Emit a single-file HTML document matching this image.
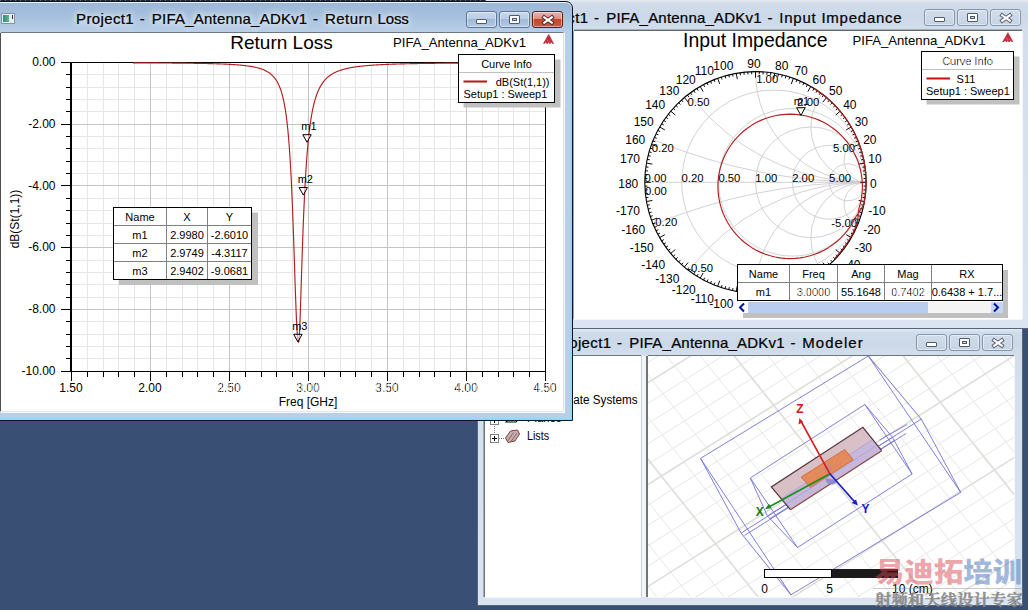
<!DOCTYPE html><html><head><meta charset="utf-8"><title>HFSS</title><style>
html,body{margin:0;padding:0}
body{width:1028px;height:610px;overflow:hidden;position:relative;background:#3a4f74;font-family:"Liberation Sans",sans-serif}
.abs{position:absolute}
svg{position:absolute;left:0;top:0;overflow:hidden}
svg text{font-family:"Liberation Sans",sans-serif}
.win{position:absolute;box-sizing:border-box}
.title{position:absolute;white-space:pre;color:#000;font-size:15px;line-height:20px;-webkit-text-stroke:0.22px #000}
.btn{position:absolute;box-sizing:border-box;border-radius:3px}
.client{position:absolute;background:#fff;overflow:hidden}
</style></head><body>
<svg width="1028" height="610" style="z-index:0"><defs><pattern id="dith" width="4" height="4" patternUnits="userSpaceOnUse"><rect width="4" height="4" fill="#3a4f74"/><rect x="0" y="0" width="1" height="1" fill="#34496d"/><rect x="2" y="2" width="1" height="1" fill="#34496d"/><rect x="2" y="0" width="1" height="1" fill="#3e5379"/><rect x="0" y="2" width="1" height="1" fill="#3e5379"/></pattern></defs><rect width="1028" height="610" fill="url(#dith)"/><rect width="1028" height="2" fill="#1e2839"/><path d="M0 0.5H1028" stroke="#5a6a86" stroke-width="1" stroke-dasharray="1 4"/></svg>
<div class="win" style="left:485px;top:-1px;width:555px;height:330px;background:linear-gradient(#e4ebf4 0px,#d2ddeb 3px,#cbd8e8 16px,#d3deec 30px,#dbe5f1 100%);border:1px solid #55657c;z-index:1">
</div>
<div class="title" id="t2" style="left:530.5px;top:7.5px;z-index:2;"><span style="letter-spacing:0.359px;white-space:pre">Project1</span><span style="letter-spacing:1.490px;white-space:pre"> - </span><span style="letter-spacing:0.213px;white-space:pre">PIFA_Antenna_ADKv1</span><span style="letter-spacing:1.390px;white-space:pre"> - </span><span style="letter-spacing:0.757px;white-space:pre">Input Impedance</span></div>
<div class="abs" style="z-index:2;left:0;top:0"><div class="btn" style="left:924.0px;top:9px;width:31px;height:17px;background:linear-gradient(#d2ddea,#c5d3e4);border:1px solid #8595ad;box-shadow:inset 0 0 0 1px rgba(255,255,255,.45)"></div><div class="abs" style="left:933.5px;top:17.0px;width:11px;height:4.5px;box-sizing:border-box;background:#fff;border:1px solid #505a6a;border-radius:1px"></div><div class="btn" style="left:957.1px;top:9px;width:31px;height:17px;background:linear-gradient(#d2ddea,#c5d3e4);border:1px solid #8595ad;box-shadow:inset 0 0 0 1px rgba(255,255,255,.45)"></div><div class="abs" style="left:966.6px;top:12.5px;width:11px;height:9px;box-sizing:border-box;background:#fff;border:1px solid #505a6a;border-radius:1px"></div><div class="abs" style="left:969.6px;top:15.5px;width:5px;height:3px;box-sizing:border-box;background:#c4d2e4;border:1px solid #505a6a"></div><div class="btn" style="left:990.2px;top:9px;width:31px;height:17px;background:linear-gradient(#d2ddea,#c5d3e4);border:1px solid #8595ad;box-shadow:inset 0 0 0 1px rgba(255,255,255,.45)"></div><svg style="left:998.7px;top:11.5px" width="14" height="12" viewBox="0 0 14 12"><path d="M3.2 3.3L10.8 8.7M10.8 3.3L3.2 8.7" stroke="#565f70" stroke-width="4" stroke-linecap="square" fill="none"/><path d="M3.2 3.3L10.8 8.7M10.8 3.3L3.2 8.7" stroke="#fff" stroke-width="2.1" stroke-linecap="square" fill="none"/></svg></div>
<div class="client" style="left:574px;top:31px;width:448px;height:288px;z-index:2;box-shadow:0 -1.4px 0 #62686f, -1px 0 0 #9aa7b8, 1px 0 0 #f4f8fc, 0 1px 0 #f4f8fc">
<svg width="448" height="288" viewBox="574 31 448 288">
<clipPath id="sc"><circle cx="755.5" cy="182.3" r="110.7"/></clipPath>
<g clip-path="url(#sc)" fill="none" stroke="#cdcdcd" stroke-width="0.9"><circle cx="773.95" cy="182.30" r="92.25"/><circle cx="792.40" cy="182.30" r="73.80"/><circle cx="810.85" cy="182.30" r="55.35"/><circle cx="829.30" cy="182.30" r="36.90"/><circle cx="847.75" cy="182.30" r="18.45"/><circle cx="866.20" cy="-371.20" r="553.50"/><circle cx="866.20" cy="735.80" r="553.50"/><circle cx="866.20" cy="-39.10" r="221.40"/><circle cx="866.20" cy="403.70" r="221.40"/><circle cx="866.20" cy="71.60" r="110.70"/><circle cx="866.20" cy="293.00" r="110.70"/><circle cx="866.20" cy="126.95" r="55.35"/><circle cx="866.20" cy="237.65" r="55.35"/><circle cx="866.20" cy="160.16" r="22.14"/><circle cx="866.20" cy="204.44" r="22.14"/><path d="M644.8 182.3H866.2"/></g>
<circle cx="755.5" cy="182.3" r="110.7" fill="none" stroke="#000" stroke-width="1.1"/>
<path d="M866.20 182.30L860.20 182.30M866.13 178.44L863.53 178.53M865.93 174.58L863.34 174.76M865.59 170.73L863.01 171.00M865.12 166.89L862.55 167.26M864.52 163.08L858.61 164.12M863.78 159.28L861.24 159.82M862.91 155.52L860.39 156.15M861.91 151.79L859.41 152.50M860.78 148.09L858.31 148.90M859.52 144.44L853.89 146.49M858.14 140.83L855.73 141.81M856.63 137.27L854.25 138.33M855.00 133.77L852.66 134.91M853.24 130.33L850.95 131.55M851.37 126.95L846.17 129.95M849.38 123.64L847.17 125.02M847.27 120.40L845.12 121.85M845.06 117.23L842.95 118.76M842.73 114.15L840.68 115.75M840.30 111.14L835.70 115.00M837.77 108.23L835.83 109.97M835.13 105.40L833.26 107.21M832.40 102.67L830.59 104.54M829.57 100.03L827.83 101.97M826.66 97.50L822.80 102.10M823.65 95.07L822.05 97.12M820.57 92.74L819.04 94.85M817.40 90.53L815.95 92.68M814.16 88.42L812.78 90.63M810.85 86.43L807.85 91.63M807.47 84.56L806.25 86.85M804.03 82.80L802.89 85.14M800.53 81.17L799.47 83.55M796.97 79.66L795.99 82.07M793.36 78.28L791.31 83.91M789.71 77.02L788.90 79.49M786.01 75.89L785.30 78.39M782.28 74.89L781.65 77.41M778.52 74.02L777.98 76.56M774.72 73.28L773.68 79.19M770.91 72.68L770.54 75.25M767.07 72.21L766.80 74.79M763.22 71.87L763.04 74.46M759.36 71.67L759.27 74.27M755.50 71.60L755.50 77.60M751.64 71.67L751.73 74.27M747.78 71.87L747.96 74.46M743.93 72.21L744.20 74.79M740.09 72.68L740.46 75.25M736.28 73.28L737.32 79.19M732.48 74.02L733.02 76.56M728.72 74.89L729.35 77.41M724.99 75.89L725.70 78.39M721.29 77.02L722.10 79.49M717.64 78.28L719.69 83.91M714.03 79.66L715.01 82.07M710.47 81.17L711.53 83.55M706.97 82.80L708.11 85.14M703.53 84.56L704.75 86.85M700.15 86.43L703.15 91.63M696.84 88.42L698.22 90.63M693.60 90.53L695.05 92.68M690.43 92.74L691.96 94.85M687.35 95.07L688.95 97.12M684.34 97.50L688.20 102.10M681.43 100.03L683.17 101.97M678.60 102.67L680.41 104.54M675.87 105.40L677.74 107.21M673.23 108.23L675.17 109.97M670.70 111.14L675.30 115.00M668.27 114.15L670.32 115.75M665.94 117.23L668.05 118.76M663.73 120.40L665.88 121.85M661.62 123.64L663.83 125.02M659.63 126.95L664.83 129.95M657.76 130.33L660.05 131.55M656.00 133.77L658.34 134.91M654.37 137.27L656.75 138.33M652.86 140.83L655.27 141.81M651.48 144.44L657.11 146.49M650.22 148.09L652.69 148.90M649.09 151.79L651.59 152.50M648.09 155.52L650.61 156.15M647.22 159.28L649.76 159.82M646.48 163.08L652.39 164.12M645.88 166.89L648.45 167.26M645.41 170.73L647.99 171.00M645.07 174.58L647.66 174.76M644.87 178.44L647.47 178.53M644.80 182.30L650.80 182.30M644.87 186.16L647.47 186.07M645.07 190.02L647.66 189.84M645.41 193.87L647.99 193.60M645.88 197.71L648.45 197.34M646.48 201.52L652.39 200.48M647.22 205.32L649.76 204.78M648.09 209.08L650.61 208.45M649.09 212.81L651.59 212.10M650.22 216.51L652.69 215.70M651.48 220.16L657.11 218.11M652.86 223.77L655.27 222.79M654.37 227.33L656.75 226.27M656.00 230.83L658.34 229.69M657.76 234.27L660.05 233.05M659.63 237.65L664.83 234.65M661.62 240.96L663.83 239.58M663.73 244.20L665.88 242.75M665.94 247.37L668.05 245.84M668.27 250.45L670.32 248.85M670.70 253.46L675.30 249.60M673.23 256.37L675.17 254.63M675.87 259.20L677.74 257.39M678.60 261.93L680.41 260.06M681.43 264.57L683.17 262.63M684.34 267.10L688.20 262.50M687.35 269.53L688.95 267.48M690.43 271.86L691.96 269.75M693.60 274.07L695.05 271.92M696.84 276.18L698.22 273.97M700.15 278.17L703.15 272.97M703.53 280.04L704.75 277.75M706.97 281.80L708.11 279.46M710.47 283.43L711.53 281.05M714.03 284.94L715.01 282.53M717.64 286.32L719.69 280.69M721.29 287.58L722.10 285.11M724.99 288.71L725.70 286.21M728.72 289.71L729.35 287.19M732.48 290.58L733.02 288.04M736.28 291.32L737.32 285.41M740.09 291.92L740.46 289.35M743.93 292.39L744.20 289.81M747.78 292.73L747.96 290.14M751.64 292.93L751.73 290.33M755.50 293.00L755.50 287.00M759.36 292.93L759.27 290.33M763.22 292.73L763.04 290.14M767.07 292.39L766.80 289.81M770.91 291.92L770.54 289.35M774.72 291.32L773.68 285.41M778.52 290.58L777.98 288.04M782.28 289.71L781.65 287.19M786.01 288.71L785.30 286.21M789.71 287.58L788.90 285.11M793.36 286.32L791.31 280.69M796.97 284.94L795.99 282.53M800.53 283.43L799.47 281.05M804.03 281.80L802.89 279.46M807.47 280.04L806.25 277.75M810.85 278.17L807.85 272.97M814.16 276.18L812.78 273.97M817.40 274.07L815.95 271.92M820.57 271.86L819.04 269.75M823.65 269.53L822.05 267.48M826.66 267.10L822.80 262.50M829.57 264.57L827.83 262.63M832.40 261.93L830.59 260.06M835.13 259.20L833.26 257.39M837.77 256.37L835.83 254.63M840.30 253.46L835.70 249.60M842.73 250.45L840.68 248.85M845.06 247.37L842.95 245.84M847.27 244.20L845.12 242.75M849.38 240.96L847.17 239.58M851.37 237.65L846.17 234.65M853.24 234.27L850.95 233.05M855.00 230.83L852.66 229.69M856.63 227.33L854.25 226.27M858.14 223.77L855.73 222.79M859.52 220.16L853.89 218.11M860.78 216.51L858.31 215.70M861.91 212.81L859.41 212.10M862.91 209.08L860.39 208.45M863.78 205.32L861.24 204.78M864.52 201.52L858.61 200.48M865.12 197.71L862.55 197.34M865.59 193.87L863.01 193.60M865.93 190.02L863.34 189.84M866.13 186.16L863.53 186.07" stroke="#000" stroke-width="0.95" fill="none"/>
<text x="640.05" y="214.57" font-size="12" text-anchor="end" fill="#000" >-170</text>
<text x="645.24" y="233.93" font-size="12" text-anchor="end" fill="#000" >-160</text>
<text x="653.71" y="252.10" font-size="12" text-anchor="end" fill="#000" >-150</text>
<text x="665.20" y="268.52" font-size="12" text-anchor="end" fill="#000" >-140</text>
<text x="679.38" y="282.70" font-size="12" text-anchor="end" fill="#000" >-130</text>
<text x="695.80" y="294.19" font-size="12" text-anchor="end" fill="#000" >-120</text>
<text x="713.97" y="302.66" font-size="12" text-anchor="end" fill="#000" >-110</text>
<text x="733.33" y="307.85" font-size="12" text-anchor="end" fill="#000" >-100</text>
<text x="754.00" y="309.60" font-size="12" text-anchor="middle" fill="#000" >-90</text>
<text x="775.07" y="307.85" font-size="12" text-anchor="start" fill="#000" >-80</text>
<text x="794.43" y="302.66" font-size="12" text-anchor="start" fill="#000" >-70</text>
<text x="812.60" y="294.19" font-size="12" text-anchor="start" fill="#000" >-60</text>
<text x="829.02" y="282.70" font-size="12" text-anchor="start" fill="#000" >-50</text>
<text x="843.20" y="268.52" font-size="12" text-anchor="start" fill="#000" >-40</text>
<text x="854.69" y="252.10" font-size="12" text-anchor="start" fill="#000" >-30</text>
<text x="863.16" y="233.93" font-size="12" text-anchor="start" fill="#000" >-20</text>
<text x="868.35" y="214.57" font-size="12" text-anchor="start" fill="#000" >-10</text>
<text x="870.10" y="188.10" font-size="12" text-anchor="start" fill="#000" >0</text>
<text x="868.35" y="163.23" font-size="12" text-anchor="start" fill="#000" >10</text>
<text x="863.16" y="143.87" font-size="12" text-anchor="start" fill="#000" >20</text>
<text x="854.69" y="125.70" font-size="12" text-anchor="start" fill="#000" >30</text>
<text x="843.20" y="109.28" font-size="12" text-anchor="start" fill="#000" >40</text>
<text x="829.02" y="95.10" font-size="12" text-anchor="start" fill="#000" >50</text>
<text x="812.60" y="83.61" font-size="12" text-anchor="start" fill="#000" >60</text>
<text x="794.43" y="75.14" font-size="12" text-anchor="start" fill="#000" >70</text>
<text x="775.07" y="69.95" font-size="12" text-anchor="start" fill="#000" >80</text>
<text x="754.00" y="68.20" font-size="12" text-anchor="middle" fill="#000" >90</text>
<text x="733.33" y="69.95" font-size="12" text-anchor="end" fill="#000" >100</text>
<text x="713.97" y="75.14" font-size="12" text-anchor="end" fill="#000" >110</text>
<text x="695.80" y="83.61" font-size="12" text-anchor="end" fill="#000" >120</text>
<text x="679.38" y="95.10" font-size="12" text-anchor="end" fill="#000" >130</text>
<text x="665.20" y="109.28" font-size="12" text-anchor="end" fill="#000" >140</text>
<text x="653.71" y="125.70" font-size="12" text-anchor="end" fill="#000" >150</text>
<text x="645.24" y="143.87" font-size="12" text-anchor="end" fill="#000" >160</text>
<text x="640.05" y="163.23" font-size="12" text-anchor="end" fill="#000" >170</text>
<text x="638.30" y="188.10" font-size="12" text-anchor="end" fill="#000" >180</text>
<text x="644.60" y="182.20" font-size="11.3" text-anchor="start" fill="#000" >0.00</text>
<text x="681.50" y="182.20" font-size="11.3" text-anchor="start" fill="#000" >0.20</text>
<text x="718.40" y="182.20" font-size="11.3" text-anchor="start" fill="#000" >0.50</text>
<text x="755.30" y="182.20" font-size="11.3" text-anchor="start" fill="#000" >1.00</text>
<text x="792.20" y="182.20" font-size="11.3" text-anchor="start" fill="#000" >2.00</text>
<text x="829.10" y="182.20" font-size="11.3" text-anchor="start" fill="#000" >5.00</text>
<text x="651.72" y="151.52" font-size="11.3" text-anchor="start" fill="#000" >0.20</text>
<text x="651.52" y="226.38" font-size="11.3" text-anchor="start" fill="#000" >-0.20</text>
<text x="687.48" y="105.54" font-size="11.3" text-anchor="start" fill="#000" >0.50</text>
<text x="687.28" y="272.36" font-size="11.3" text-anchor="start" fill="#000" >-0.50</text>
<text x="756.20" y="83.40" font-size="11.3" text-anchor="start" fill="#000" >1.00</text>
<text x="753.70" y="294.50" font-size="11.3" text-anchor="start" fill="#000" >-1.00</text>
<text x="819.32" y="105.64" font-size="11.3" text-anchor="end" fill="#000" >2.00</text>
<text x="821.32" y="272.66" font-size="11.3" text-anchor="end" fill="#000" >-2.00</text>
<text x="855.08" y="151.62" font-size="11.3" text-anchor="end" fill="#000" >5.00</text>
<text x="857.08" y="226.68" font-size="11.3" text-anchor="end" fill="#000" >-5.00</text>
<text x="644.90" y="195.20" font-size="11.3" text-anchor="start" fill="#000" >0.00</text>
<path d="M814.04 88.61 L817.28 90.71 L820.44 92.92 L823.52 95.24 L826.51 97.67 L829.42 100.20 L832.24 102.83 L834.97 105.56 L837.60 108.38 L840.13 111.29 L842.56 114.28 L844.88 117.36 L847.09 120.52 L849.19 123.76 L851.18 127.06 L853.05 130.43 L854.80 133.87 L856.43 137.36 L857.93 140.91 L859.32 144.51 L860.57 148.16 L861.70 151.85 L862.70 155.57 L863.56 159.33 L864.30 163.12 L864.90 166.92 L865.37 170.75 L865.71 174.59 L865.91 178.44 L865.98 182.30 L865.91 186.16 L865.71 190.01 L865.37 193.85 L864.90 197.68 L864.30 201.48 L863.56 205.27 L855.07 218.04 L852.70 222.49 L850.03 226.77 L847.07 230.84 L843.83 234.71 L840.33 238.33 L836.58 241.71 L832.61 244.81 L828.43 247.63 L824.06 250.15 L819.53 252.36 L814.85 254.25 L810.06 255.81 L805.17 257.03 L800.20 257.90 L795.19 258.43 L790.15 258.61 L785.11 258.43 L780.10 257.90 L775.13 257.03 L770.24 255.81 L765.44 254.25 L760.77 252.36 L756.24 250.15 L751.87 247.63 L747.69 244.81 L743.72 241.71 L739.97 238.33 L736.47 234.71 L733.23 230.84 L730.27 226.77 L727.59 222.49 L725.23 218.04 L723.18 213.43 L721.45 208.69 L720.06 203.85 L719.01 198.92 L718.31 193.92 L717.96 188.89 L717.96 183.85 L718.31 178.82 L719.01 173.83 L720.06 168.90 L721.45 164.05 L723.18 159.32 L725.23 154.71 L727.59 150.26 L730.27 145.98 L733.23 141.90 L736.47 138.04 L739.97 134.41 L743.72 131.04 L747.69 127.94 L751.87 125.12 L756.24 122.60 L760.77 120.39 L765.44 118.50 L770.24 116.94 L775.13 115.72 L780.10 114.84 L785.11 114.32 L790.15 114.14 L795.19 114.32 L800.20 114.84 L805.17 115.72 L810.06 116.94 L814.85 118.50 L819.53 120.39 L824.06 122.60 L828.43 125.12 L832.61 127.94 L836.58 131.04 L840.33 134.41 L843.83 138.04 L847.07 141.90 L850.03 145.98 L852.70 150.26 L855.07 154.71 L857.12 159.32 L858.85 164.05 L860.24 168.90 L861.28 173.83 L861.99 178.82 L862.34 183.85 L862.34 188.89 L861.99 193.92 L861.28 198.92 L860.24 203.85 L858.85 208.69 L857.32 223.44 L855.82 226.97 L854.20 230.44 L852.46 233.85 L850.60 237.21 L848.63 240.49 L846.54 243.71 L844.34 246.85 L842.03 249.91 L839.62 252.89 L837.11 255.78 L834.49 258.58" stroke="#b41e1e" stroke-width="1.15" fill="none" stroke-linejoin="round"/>
<path d="M800.9 115.3 l-4.3 -7.6 h8.6 Z" fill="#fff" fill-opacity="0.5" stroke="#000" stroke-width="1"/>
<text x="801.45" y="105.40" font-size="11" text-anchor="middle" fill="#000" >m1</text>
<text x="755.30" y="47.00" font-size="19.4" text-anchor="middle" fill="#000" >Input Impedance</text>
<text x="852.50" y="45.00" font-size="13.15" text-anchor="start" fill="#000" >PIFA_Antenna_ADKv1</text>
<g transform="translate(1002.3,32.4)"><path d="M5.4 0 L6 0 L11 9.6 L9.3 9.6 L8.3 8 L7.4 9.6 L6.2 9.6 L5.5 8 L4.8 9.6 L3.6 9.6 L2.8 8 L1.8 9.6 L0 9.6 Z" fill="#c4283c"/><path d="M5.6 0.5 L6.6 3 L5.8 2.6Z M7.4 4.4 L8.2 6 L7.2 5.4Z M3.2 5 L4 4.2 L3.8 5.6Z M9.6 8 L10.6 9.4 L9.6 9.2Z" fill="#9a8a88"/><path d="M4.4 5.2 L5.6 6.8 L4.2 7.4Z M6.6 6.2 L7.6 7.6 L6.4 7.6Z" fill="#e87a8a"/></g>
<rect x="926.5" y="56.5" width="93" height="48" fill="#c0c0c0"/>
<rect x="921.5" y="51.5" width="92" height="48" fill="#fff" stroke="#000" stroke-width="1" shape-rendering="crispEdges"/>
<path d="M922 69.5H1013" stroke="#c0c0c0" stroke-width="1" shape-rendering="crispEdges"/>
<text x="967.50" y="65.00" font-size="11" text-anchor="middle" fill="#000" >Curve Info</text>
<rect x="940" y="56" width="56" height="11" fill="url(#garb)" opacity="0.7"/>
<path d="M926.5 78.5H950" stroke="#c01010" stroke-width="2"/>
<text x="966.00" y="83.00" font-size="11" text-anchor="middle" fill="#000" >S11</text>
<text x="926.00" y="95.00" font-size="11" text-anchor="start" fill="#000" >Setup1 : Sweep1</text>
<rect x="743" y="270" width="265" height="48" fill="#c0c0c0"/>
<rect x="737.5" y="264.5" width="265" height="36" fill="#fff" stroke="#000" stroke-width="1" shape-rendering="crispEdges"/>
<path d="M789.5 265V300M837.5 265V300M884.5 265V300M931.5 265V300M738 282.5H1002" stroke="#808080" stroke-width="1" shape-rendering="crispEdges"/>
<text x="763.50" y="278.00" font-size="11" text-anchor="middle" fill="#000" >Name</text>
<text x="813.50" y="278.00" font-size="11" text-anchor="middle" fill="#000" >Freq</text>
<text x="861.00" y="278.00" font-size="11" text-anchor="middle" fill="#000" >Ang</text>
<text x="908.00" y="278.00" font-size="11" text-anchor="middle" fill="#000" >Mag</text>
<text x="967.00" y="278.00" font-size="11" text-anchor="middle" fill="#000" >RX</text>
<text x="763.50" y="296.00" font-size="11" text-anchor="middle" fill="#000" >m1</text>
<text x="813.50" y="296.00" font-size="11" text-anchor="middle" fill="#000" >3.0000</text>
<text x="861.00" y="296.00" font-size="11" text-anchor="middle" fill="#000" >55.1648</text>
<text x="908.00" y="296.00" font-size="11" text-anchor="middle" fill="#000" >0.7402</text>
<text x="967.00" y="296.00" font-size="11" text-anchor="middle" fill="#000" >0.6438 + 1.7...</text>
<rect x="796" y="286" width="36" height="11" fill="url(#garb)" opacity="0.8"/>
<rect x="890" y="286" width="36" height="11" fill="url(#garb)" opacity="0.8"/>
<rect x="738" y="301" width="265" height="12" fill="#fff"/>
<rect x="748" y="302" width="180" height="11" fill="#b8cdf0"/>
<rect x="928" y="302" width="63" height="11" fill="#f4f4f4"/>
<rect x="991" y="302" width="12" height="11" fill="#c4d6f2"/>
<path d="M744 303.5 l-4 4 l4 4" stroke="#00109a" stroke-width="2" fill="none"/>
<path d="M994 303.5 l4 4 l-4 4" stroke="#00109a" stroke-width="2" fill="none"/>
</svg></div>
<div class="win" style="left:477px;top:328px;width:546px;height:278px;background:linear-gradient(#e4ebf4 0px,#d2ddeb 3px,#cbd8e8 14px,#d3deec 27px,#dbe5f1 100%);border:1px solid #55657c;z-index:3"></div>
<div class="title" id="t3" style="left:553.5px;top:332.5px;z-index:4;"><span style="letter-spacing:0.359px;white-space:pre">Project1</span><span style="letter-spacing:1.490px;white-space:pre"> - </span><span style="letter-spacing:0.213px;white-space:pre">PIFA_Antenna_ADKv1</span><span style="letter-spacing:1.390px;white-space:pre"> - </span><span style="letter-spacing:1.016px;white-space:pre">Modeler</span></div>
<div class="abs" style="z-index:4;left:0;top:0"><div class="btn" style="left:916.0px;top:334px;width:31px;height:17px;background:linear-gradient(#d2ddea,#c5d3e4);border:1px solid #8595ad;box-shadow:inset 0 0 0 1px rgba(255,255,255,.45)"></div><div class="abs" style="left:925.5px;top:342.0px;width:11px;height:4.5px;box-sizing:border-box;background:#fff;border:1px solid #505a6a;border-radius:1px"></div><div class="btn" style="left:949.1px;top:334px;width:31px;height:17px;background:linear-gradient(#d2ddea,#c5d3e4);border:1px solid #8595ad;box-shadow:inset 0 0 0 1px rgba(255,255,255,.45)"></div><div class="abs" style="left:958.6px;top:337.5px;width:11px;height:9px;box-sizing:border-box;background:#fff;border:1px solid #505a6a;border-radius:1px"></div><div class="abs" style="left:961.6px;top:340.5px;width:5px;height:3px;box-sizing:border-box;background:#c4d2e4;border:1px solid #505a6a"></div><div class="btn" style="left:982.2px;top:334px;width:31px;height:17px;background:linear-gradient(#d2ddea,#c5d3e4);border:1px solid #8595ad;box-shadow:inset 0 0 0 1px rgba(255,255,255,.45)"></div><svg style="left:990.7px;top:336.5px" width="14" height="12" viewBox="0 0 14 12"><path d="M3.2 3.3L10.8 8.7M10.8 3.3L3.2 8.7" stroke="#565f70" stroke-width="4" stroke-linecap="square" fill="none"/><path d="M3.2 3.3L10.8 8.7M10.8 3.3L3.2 8.7" stroke="#fff" stroke-width="2.1" stroke-linecap="square" fill="none"/></svg></div>
<div class="client" style="left:485px;top:356px;width:156px;height:241px;z-index:4;box-shadow:0 -1px 0 #6e7683,-1.5px 0 0 #6f747b, 1px 0 0 #c9ced6, 0 1px 0 #f4f8fc">
<div class="abs" style="right:3.9px;top:36.2px;font-size:12.5px;line-height:16px;white-space:nowrap;transform:scaleX(0.935);transform-origin:100% 50%" id="tcs">Coordinate Systems</div>
<div class="abs" style="left:41.6px;top:53.8px;font-size:12.5px;line-height:16px;white-space:nowrap;transform:scaleX(0.9);transform-origin:0 50%">Planes</div>
<div class="abs" style="left:41.6px;top:72.3px;font-size:12.5px;line-height:16px;white-space:nowrap;transform:scaleX(0.86);transform-origin:0 50%" id="tls">Lists</div>
<svg width="156" height="241" viewBox="485 356 156 241">
<path d="M494.5 400V434M499 438.5H505M499 420.5H505" stroke="#808080" stroke-width="1" stroke-dasharray="1 1" shape-rendering="crispEdges"/>
<rect x="490.5" y="416.5" width="8" height="8" fill="#fff" stroke="#808080" stroke-width="1" shape-rendering="crispEdges"/>
<path d="M492 420.5H497M494.5 418.0V423.0" stroke="#000" stroke-width="1" shape-rendering="crispEdges"/>
<rect x="490.5" y="434.5" width="8" height="8" fill="#fff" stroke="#808080" stroke-width="1" shape-rendering="crispEdges"/>
<path d="M492 438.5H497M494.5 436.0V441.0" stroke="#000" stroke-width="1" shape-rendering="crispEdges"/>
<path d="M505.5 438L510.5 431L517.5 430L519.5 434L515 441L508 442.5Z" fill="#c0b0b0" stroke="#8a3a3a" stroke-width="1"/>
<path d="M508 440.5L513.5 432.5M511 441.5L517 433" stroke="#7a5050" stroke-width="0.8"/>
<path d="M506 422L510 417H520L516 422Z" fill="#fff" stroke="#000" stroke-width="1.2"/>
</svg>
</div>
<div class="abs" style="left:642px;top:356px;width:5px;height:241px;background:#f2f4f7;z-index:4"></div>
<div class="client" style="left:648px;top:356px;width:366px;height:241px;z-index:4;box-shadow:0 -1px 0 #6e7683,-2px 0 0 #70757c, 1px 0 0 #f4f8fc, 0 1px 0 #f4f8fc">
<svg width="366" height="241" viewBox="648 356 366 241">
<path d="M640 102.8L1020 -136.6M640 123.1L1020 -116.3M640 143.5L1020 -95.9M640 163.8L1020 -75.6M640 204.6L1020 -34.8M640 224.9L1020 -14.5M640 245.3L1020 5.9M640 265.6L1020 26.2M640 306.4L1020 67.0M640 326.7L1020 87.3M640 347.1L1020 107.7M640 367.4L1020 128.0M640 408.2L1020 168.8M640 428.5L1020 189.1M640 448.9L1020 209.5M640 469.2L1020 229.8M640 510.0L1020 270.6M640 530.3L1020 290.9M640 550.7L1020 311.3M640 571.0L1020 331.6M640 611.8L1020 372.4M640 632.1L1020 392.7M640 652.5L1020 413.1M640 672.8L1020 433.4M640 713.6L1020 474.2M640 733.9L1020 494.5M640 754.3L1020 514.9M640 774.6L1020 535.2M640 815.4L1020 576.0M640 835.7L1020 596.3M640 856.1L1020 616.7M640 876.4L1020 637.0M640 917.2L1020 677.8M640 937.5L1020 698.1M640 957.9L1020 718.5M640 978.2L1020 738.8M640 1019.0L1020 779.6M640 1039.3L1020 799.9M640 1059.7L1020 820.3M640 1080.0L1020 840.6M640 1120.8L1020 881.4M640 1141.1L1020 901.7M640 1161.5L1020 922.1M640 1181.8L1020 942.4M87.3 350L287.3 600M121.1 350L321.1 600M154.9 350L354.9 600M188.7 350L388.7 600M256.3 350L456.3 600M290.1 350L490.1 600M323.9 350L523.9 600M357.7 350L557.7 600M425.3 350L625.3 600M459.1 350L659.1 600M492.9 350L692.9 600M526.7 350L726.7 600M594.3 350L794.3 600M628.1 350L828.1 600M661.9 350L861.9 600M695.7 350L895.7 600M763.3 350L963.3 600M797.1 350L997.1 600M830.9 350L1030.9 600M864.7 350L1064.7 600M932.3 350L1132.3 600M966.1 350L1166.1 600M999.9 350L1199.9 600M1033.7 350L1233.7 600M1101.3 350L1301.3 600" stroke="#e7e7e3" stroke-width="1" fill="none"/>
<path d="M640 82.4L1020 -157.0M640 184.2L1020 -55.2M640 286.0L1020 46.6M640 387.8L1020 148.4M640 489.6L1020 250.2M640 591.4L1020 352.0M640 693.2L1020 453.8M640 795.0L1020 555.6M640 896.8L1020 657.4M640 998.6L1020 759.2M640 1100.4L1020 861.0M53.5 350L253.5 600M222.5 350L422.5 600M391.5 350L591.5 600M560.5 350L760.5 600M729.5 350L929.5 600M898.5 350L1098.5 600M1067.5 350L1267.5 600" stroke="#dededa" stroke-width="1.6" fill="none"/>
<path d="M868.3 356.0L960.7 492.4L791.0 594.8L700.5 458.4ZM868.3 356.0L921.3 419.0M921.3 419.0L960.7 492.4M700.5 458.4L741.1 533.1M741.1 533.1L791.0 594.8M741.1 533.1L921.3 419.0M864.9 404.5L912.1 474.0L797.5 547.5L750.3 478.0ZM864.9 404.5L892.5 437.3M892.5 437.3L912.1 474.0M750.3 478.0L767.4 516.0M767.4 516.0L797.5 547.5M767.4 516.0L892.5 437.3M744.5 535.5L906.0 433.5M770.0 518.5L895.0 440.0M879.5 440.0L907.0 424.5" stroke="#7272d6" stroke-width="0.9" fill="none"/>
<path d="M771.3 486.9L862.9 427.3L881.7 450.7L790.5 509.7Z" fill="#d6bac2" fill-opacity="0.93"/>
<path d="M781.3 498.8L872.7 439.5L881.7 450.7L790.5 509.7Z" fill="#c6b6dc" fill-opacity="0.95"/>
<path d="M785.9 504.2L877.2 445.1M781.3 498.8L872.7 439.5" stroke="#a9a0d8" stroke-width="0.8" fill="none"/>
<path d="M790.5 509.7L771.3 486.9L862.9 427.3L881.7 450.7" fill="none" stroke="#553640" stroke-width="1.2"/>
<path d="M790.5 509.7L881.7 450.7" stroke="#8a4a40" stroke-width="1.3"/>
<path d="M801.1 477.1L844.8 449.4L853.3 459.7L810.3 487.4Z" fill="#e48a5a" stroke="#c46a3c" stroke-width="0.8"/>
<ellipse cx="828" cy="468.8" rx="3.6" ry="4.6" fill="#c08888" fill-opacity="0.8"/>
<path d="M825.6 478.3 A6.2 6.2 0 0 0 837.6 480.6 Z" fill="#8c86d0" fill-opacity="0.9"/>
<path d="M829.9 473.8L767.5 507.8" stroke="#1c8c1c" stroke-width="1.6"/>
<path d="M765 509.2l6.5 -1.2l-2.6 -4.2Z" fill="#1c8c1c"/>
<path d="M829.9 473.8L800.6 420.5" stroke="#d81c1c" stroke-width="1.6"/>
<path d="M799.4 418l-0.9 6.4l4.6 -2.4Z" fill="#d81c1c"/>
<path d="M829.9 473.8L856 503.4" stroke="#1c1cc8" stroke-width="1.6"/>
<path d="M858 505.6l-2 -6.2l-4.2 3.6Z" fill="#1c1cc8"/>
<text x="800.00" y="413.00" font-size="12" text-anchor="middle" fill="#c81818" font-weight="bold">Z</text>
<text x="865.50" y="512.50" font-size="12" text-anchor="middle" fill="#1818c0" font-weight="bold">Y</text>
<text x="759.70" y="516.00" font-size="12" text-anchor="middle" fill="#187818" font-weight="bold">X</text>
<rect x="764.5" y="569.5" width="67" height="8" fill="#fff" stroke="#000" stroke-width="1" shape-rendering="crispEdges"/>
<rect x="831.5" y="569" width="66.5" height="9" fill="#1a1a1a" shape-rendering="crispEdges"/>
<text x="764.60" y="593.00" font-size="12" text-anchor="middle" fill="#000" >0</text>
<text x="829.70" y="593.00" font-size="12" text-anchor="middle" fill="#000" >5</text>
<text x="892.00" y="593.00" font-size="12" text-anchor="start" fill="#000" >10 (cm)</text>
</svg></div>
<div class="win" style="left:-8px;top:1px;width:581px;height:420px;background:linear-gradient(#9cb8d7 0px,#a5c0dd 14px,#b9cfe8 30px,#b9cfe9 100%);border:1px solid #10161f;border-radius:7px 7px 0 0;box-shadow:inset 0 1px 0 0 rgba(255,255,255,.8);overflow:hidden;z-index:10"><div class="abs" style="right:0;top:26px;bottom:0;width:2px;background:linear-gradient(90deg,#9fd8f0,#7fdcf5)"></div><div class="abs" style="left:0;right:0;bottom:0;height:2px;background:linear-gradient(#93dcf3,#7fdcf5)"></div></div>
<div class="title" id="t1" style="left:76.1px;top:8.5px;z-index:11;text-shadow:0 0 6px #fff,0 0 8px #fff"><span style="letter-spacing:0.359px;white-space:pre">Project1</span><span style="letter-spacing:1.490px;white-space:pre"> - </span><span style="letter-spacing:0.213px;white-space:pre">PIFA_Antenna_ADKv1</span><span style="letter-spacing:1.390px;white-space:pre"> - </span><span style="letter-spacing:0.473px;white-space:pre">Return </span><span style="letter-spacing:-0.120px;white-space:pre">Loss</span></div>
<div class="abs" style="z-index:11;left:0;top:0"><div class="btn" style="left:466.0px;top:11px;width:31px;height:17px;background:linear-gradient(#c8d8eb 0%,#b9cde5 45%,#9fbad9 50%,#b3cae5 100%);border:1px solid #5e7794;box-shadow:inset 0 0 0 1px rgba(255,255,255,.45)"></div><div class="abs" style="left:475.5px;top:19.0px;width:11px;height:4.5px;box-sizing:border-box;background:#fff;border:1px solid #505a6a;border-radius:1px"></div><div class="btn" style="left:499.1px;top:11px;width:31px;height:17px;background:linear-gradient(#c8d8eb 0%,#b9cde5 45%,#9fbad9 50%,#b3cae5 100%);border:1px solid #5e7794;box-shadow:inset 0 0 0 1px rgba(255,255,255,.45)"></div><div class="abs" style="left:508.6px;top:14.5px;width:11px;height:9px;box-sizing:border-box;background:#fff;border:1px solid #505a6a;border-radius:1px"></div><div class="abs" style="left:511.6px;top:17.5px;width:5px;height:3px;box-sizing:border-box;background:#c4d2e4;border:1px solid #505a6a"></div><div class="btn" style="left:532.2px;top:11px;width:31px;height:17px;background:linear-gradient(#e8b5a8 0%,#dc9080 45%,#c4472f 50%,#cb5943 100%);border:1px solid #5a1f17;box-shadow:inset 0 0 0 1px rgba(255,255,255,.45)"></div><svg style="left:540.7px;top:13.5px" width="14" height="12" viewBox="0 0 14 12"><path d="M3.2 3.3L10.8 8.7M10.8 3.3L3.2 8.7" stroke="#4a2a2a" stroke-width="4" stroke-linecap="square" fill="none"/><path d="M3.2 3.3L10.8 8.7M10.8 3.3L3.2 8.7" stroke="#fff" stroke-width="2.1" stroke-linecap="square" fill="none"/></svg></div>
<div class="abs" style="z-index:11;left:1px;top:13px;width:14px;height:11px;background:#e8ecef;border:1px solid #8b949e;box-sizing:border-box"><div class="abs" style="left:1px;top:1px;width:6px;height:7px;background:linear-gradient(90deg,#2f8f77,#5fb59a)"></div><div class="abs" style="left:10px;top:1px;width:1px;height:4px;background:#333"></div></div>
<div class="client" style="left:1px;top:33px;width:562px;height:378px;z-index:11;box-shadow:0 -1px 0 #6c7785,-1px 0 0 #4d4f52, 1px 0 0 #dcdfe3, 0 1px 0 #e4e7ea, 2px 2px 0 #f6f9fc, 2px 0 0 #f6f9fc, 0 2px 0 #f6f9fc">
<svg width="562" height="378" viewBox="1 33 562 378">
<path d="M87.5 62.5V371.2 M103.5 62.5V371.2 M118.5 62.5V371.2 M134.5 62.5V371.2 M166.5 62.5V371.2 M182.5 62.5V371.2 M197.5 62.5V371.2 M213.5 62.5V371.2 M245.5 62.5V371.2 M261.5 62.5V371.2 M276.5 62.5V371.2 M292.5 62.5V371.2 M324.5 62.5V371.2 M340.5 62.5V371.2 M355.5 62.5V371.2 M371.5 62.5V371.2 M403.5 62.5V371.2 M419.5 62.5V371.2 M434.5 62.5V371.2 M450.5 62.5V371.2 M482.5 62.5V371.2 M498.5 62.5V371.2 M513.5 62.5V371.2 M529.5 62.5V371.2 M71.0 74.5H545.0 M71.0 87.5H545.0 M71.0 99.5H545.0 M71.0 111.5H545.0 M71.0 136.5H545.0 M71.0 148.5H545.0 M71.0 161.5H545.0 M71.0 173.5H545.0 M71.0 198.5H545.0 M71.0 210.5H545.0 M71.0 223.5H545.0 M71.0 235.5H545.0 M71.0 260.5H545.0 M71.0 272.5H545.0 M71.0 284.5H545.0 M71.0 297.5H545.0 M71.0 321.5H545.0 M71.0 334.5H545.0 M71.0 346.5H545.0 M71.0 358.5H545.0" stroke="#e6e6e6" stroke-width="1" fill="none" shape-rendering="crispEdges"/>
<path d="M71.5 62.5V371.2 M150.5 62.5V371.2 M229.5 62.5V371.2 M308.5 62.5V371.2 M387.5 62.5V371.2 M466.5 62.5V371.2 M545.5 62.5V371.2 M71.0 62.5H545.0 M71.0 124.5H545.0 M71.0 185.5H545.0 M71.0 247.5H545.0 M71.0 309.5H545.0 M71.0 371.5H545.0" stroke="#c4c4c4" stroke-width="1" fill="none" shape-rendering="crispEdges"/>
<path d="M61 62.5H545.5V371.5" stroke="#000" stroke-width="1" fill="none" shape-rendering="crispEdges"/>
<path d="M71 62V372" stroke="#000" stroke-width="2" fill="none" shape-rendering="crispEdges"/>
<path d="M61 371.5H546" stroke="#000" stroke-width="1" fill="none" shape-rendering="crispEdges"/>
<path d="M61 62.5H71 M66 74.5H71 M66 87.5H71 M66 99.5H71 M66 111.5H71 M61 124.5H71 M66 136.5H71 M66 148.5H71 M66 161.5H71 M66 173.5H71 M61 185.5H71 M66 198.5H71 M66 210.5H71 M66 223.5H71 M66 235.5H71 M61 247.5H71 M66 260.5H71 M66 272.5H71 M66 284.5H71 M66 297.5H71 M61 309.5H71 M66 321.5H71 M66 334.5H71 M66 346.5H71 M66 358.5H71 M61 371.5H71 M71.5 371V381 M87.5 371V377 M103.5 371V377 M118.5 371V377 M134.5 371V377 M150.5 371V381 M166.5 371V377 M182.5 371V377 M197.5 371V377 M213.5 371V377 M229.5 371V381 M245.5 371V377 M261.5 371V377 M276.5 371V377 M292.5 371V377 M308.5 371V381 M324.5 371V377 M340.5 371V377 M355.5 371V377 M371.5 371V377 M387.5 371V381 M403.5 371V377 M419.5 371V377 M434.5 371V377 M450.5 371V377 M466.5 371V381 M482.5 371V377 M498.5 371V377 M513.5 371V377 M529.5 371V377 M545.5 371V381" stroke="#000" stroke-width="1" fill="none" shape-rendering="crispEdges"/>
<text x="55.50" y="66.10" font-size="12" text-anchor="end" fill="#000" >0.00</text>
<text x="55.50" y="127.84" font-size="12" text-anchor="end" fill="#000" >-2.00</text>
<text x="55.50" y="189.58" font-size="12" text-anchor="end" fill="#000" >-4.00</text>
<text x="55.50" y="251.32" font-size="12" text-anchor="end" fill="#000" >-6.00</text>
<text x="55.50" y="313.06" font-size="12" text-anchor="end" fill="#000" >-8.00</text>
<text x="55.50" y="374.80" font-size="12" text-anchor="end" fill="#000" >-10.00</text>
<text x="71.00" y="391.80" font-size="12" text-anchor="middle" fill="#000" >1.50</text>
<text x="150.00" y="391.80" font-size="12" text-anchor="middle" fill="#000" >2.00</text>
<text x="229.00" y="391.80" font-size="12" text-anchor="middle" fill="#000" >2.50</text>
<text x="308.00" y="391.80" font-size="12" text-anchor="middle" fill="#000" >3.00</text>
<text x="387.00" y="391.80" font-size="12" text-anchor="middle" fill="#000" >3.50</text>
<text x="466.00" y="391.80" font-size="12" text-anchor="middle" fill="#000" >4.00</text>
<text x="545.00" y="391.80" font-size="12" text-anchor="middle" fill="#000" >4.50</text>
<defs><pattern id="garb" width="2.5" height="4" patternUnits="userSpaceOnUse"><rect x="0.9" y="0" width="1.1" height="4" fill="#fff"/></pattern></defs>
<rect x="216.0" y="382" width="26" height="11" fill="url(#garb)" opacity="0.8"/>
<rect x="295.0" y="382" width="26" height="11" fill="url(#garb)" opacity="0.8"/>
<rect x="374.0" y="382" width="26" height="11" fill="url(#garb)" opacity="0.8"/>
<rect x="453.0" y="382" width="26" height="11" fill="url(#garb)" opacity="0.8"/>
<rect x="532.0" y="382" width="26" height="11" fill="url(#garb)" opacity="0.8"/>
<text x="308.00" y="406.00" font-size="12" text-anchor="middle" fill="#000" >Freq [GHz]</text>
<text transform="translate(18.8,219) rotate(-90)" font-size="12" text-anchor="middle">dB(St(1,1))</text>
<text x="281.50" y="48.70" font-size="19" text-anchor="middle" fill="#000" >Return Loss</text>
<text x="393.00" y="46.90" font-size="13.15" text-anchor="start" fill="#000" >PIFA_Antenna_ADKv1</text>
<g transform="translate(543,34.2)"><path d="M5.4 0 L6 0 L11 9.6 L9.3 9.6 L8.3 8 L7.4 9.6 L6.2 9.6 L5.5 8 L4.8 9.6 L3.6 9.6 L2.8 8 L1.8 9.6 L0 9.6 Z" fill="#c4283c"/><path d="M5.6 0.5 L6.6 3 L5.8 2.6Z M7.4 4.4 L8.2 6 L7.2 5.4Z M3.2 5 L4 4.2 L3.8 5.6Z M9.6 8 L10.6 9.4 L9.6 9.2Z" fill="#9a8a88"/><path d="M4.4 5.2 L5.6 6.8 L4.2 7.4Z M6.6 6.2 L7.6 7.6 L6.4 7.6Z" fill="#e87a8a"/></g>
<path d="M132.90 62.82 L133.24 62.82 L133.58 62.82 L133.93 62.82 L134.27 62.82 L134.61 62.82 L134.95 62.82 L135.30 62.83 L135.64 62.83 L135.98 62.83 L136.32 62.83 L136.67 62.83 L137.01 62.83 L137.35 62.83 L137.69 62.84 L138.03 62.84 L138.38 62.84 L138.72 62.84 L139.06 62.84 L139.40 62.84 L139.75 62.84 L140.09 62.85 L140.43 62.85 L140.77 62.85 L141.12 62.85 L141.46 62.85 L141.80 62.85 L142.14 62.86 L142.49 62.86 L142.83 62.86 L143.17 62.86 L143.51 62.86 L143.85 62.86 L144.20 62.87 L144.54 62.87 L144.88 62.87 L145.22 62.87 L145.57 62.87 L145.91 62.87 L146.25 62.88 L146.59 62.88 L146.94 62.88 L147.28 62.88 L147.62 62.88 L147.96 62.88 L148.30 62.89 L148.65 62.89 L148.99 62.89 L149.33 62.89 L149.67 62.89 L150.02 62.89 L150.36 62.90 L150.70 62.90 L151.04 62.90 L151.39 62.90 L151.73 62.90 L152.07 62.91 L152.41 62.91 L152.76 62.91 L153.10 62.91 L153.44 62.91 L153.78 62.92 L154.12 62.92 L154.47 62.92 L154.81 62.92 L155.15 62.92 L155.49 62.93 L155.84 62.93 L156.18 62.93 L156.52 62.93 L156.86 62.93 L157.21 62.94 L157.55 62.94 L157.89 62.94 L158.23 62.94 L158.57 62.94 L158.92 62.95 L159.26 62.95 L159.60 62.95 L159.94 62.95 L160.29 62.96 L160.63 62.96 L160.97 62.96 L161.31 62.96 L161.66 62.96 L162.00 62.97 L162.34 62.97 L162.68 62.97 L163.03 62.97 L163.37 62.98 L163.71 62.98 L164.05 62.98 L164.39 62.98 L164.74 62.99 L165.08 62.99 L165.42 62.99 L165.76 62.99 L166.11 63.00 L166.45 63.00 L166.79 63.00 L167.13 63.00 L167.48 63.01 L167.82 63.01 L168.16 63.01 L168.50 63.02 L168.84 63.02 L169.19 63.02 L169.53 63.02 L169.87 63.03 L170.21 63.03 L170.56 63.03 L170.90 63.04 L171.24 63.04 L171.58 63.04 L171.93 63.04 L172.27 63.05 L172.61 63.05 L172.95 63.05 L173.30 63.06 L173.64 63.06 L173.98 63.06 L174.32 63.07 L174.66 63.07 L175.01 63.07 L175.35 63.07 L175.69 63.08 L176.03 63.08 L176.38 63.08 L176.72 63.09 L177.06 63.09 L177.40 63.09 L177.75 63.10 L178.09 63.10 L178.43 63.11 L178.77 63.11 L179.11 63.11 L179.46 63.12 L179.80 63.12 L180.14 63.12 L180.48 63.13 L180.83 63.13 L181.17 63.13 L181.51 63.14 L181.85 63.14 L182.20 63.15 L182.54 63.15 L182.88 63.15 L183.22 63.16 L183.57 63.16 L183.91 63.16 L184.25 63.17 L184.59 63.17 L184.93 63.18 L185.28 63.18 L185.62 63.19 L185.96 63.19 L186.30 63.19 L186.65 63.20 L186.99 63.20 L187.33 63.21 L187.67 63.21 L188.02 63.22 L188.36 63.22 L188.70 63.22 L189.04 63.23 L189.38 63.23 L189.73 63.24 L190.07 63.24 L190.41 63.25 L190.75 63.25 L191.10 63.26 L191.44 63.26 L191.78 63.27 L192.12 63.27 L192.47 63.28 L192.81 63.28 L193.15 63.29 L193.49 63.29 L193.84 63.30 L194.18 63.30 L194.52 63.31 L194.86 63.31 L195.20 63.32 L195.55 63.32 L195.89 63.33 L196.23 63.34 L196.57 63.34 L196.92 63.35 L197.26 63.35 L197.60 63.36 L197.94 63.37 L198.29 63.37 L198.63 63.38 L198.97 63.38 L199.31 63.39 L199.65 63.40 L200.00 63.40 L200.34 63.41 L200.68 63.41 L201.02 63.42 L201.37 63.43 L201.71 63.43 L202.05 63.44 L202.39 63.45 L202.74 63.45 L203.08 63.46 L203.42 63.47 L203.76 63.48 L204.11 63.48 L204.45 63.49 L204.79 63.50 L205.13 63.50 L205.47 63.51 L205.82 63.52 L206.16 63.53 L206.50 63.54 L206.84 63.54 L207.19 63.55 L207.53 63.56 L207.87 63.57 L208.21 63.58 L208.56 63.58 L208.90 63.59 L209.24 63.60 L209.58 63.61 L209.92 63.62 L210.27 63.63 L210.61 63.64 L210.95 63.64 L211.29 63.65 L211.64 63.66 L211.98 63.67 L212.32 63.68 L212.66 63.69 L213.01 63.70 L213.35 63.71 L213.69 63.72 L214.03 63.73 L214.38 63.74 L214.72 63.75 L215.06 63.76 L215.40 63.77 L215.74 63.78 L216.09 63.79 L216.43 63.80 L216.77 63.81 L217.11 63.83 L217.46 63.84 L217.80 63.85 L218.14 63.86 L218.48 63.87 L218.83 63.88 L219.17 63.90 L219.51 63.91 L219.85 63.92 L220.19 63.93 L220.54 63.95 L220.88 63.96 L221.22 63.97 L221.56 63.98 L221.91 64.00 L222.25 64.01 L222.59 64.03 L222.93 64.04 L223.28 64.05 L223.62 64.07 L223.96 64.08 L224.30 64.10 L224.65 64.11 L224.99 64.13 L225.33 64.14 L225.67 64.16 L226.01 64.17 L226.36 64.19 L226.70 64.21 L227.04 64.22 L227.38 64.24 L227.73 64.26 L228.07 64.27 L228.41 64.29 L228.75 64.31 L229.10 64.33 L229.44 64.35 L229.78 64.37 L230.12 64.38 L230.47 64.40 L230.81 64.42 L231.15 64.44 L231.49 64.46 L231.83 64.48 L232.18 64.50 L232.52 64.52 L232.86 64.55 L233.20 64.57 L233.55 64.59 L233.89 64.61 L234.23 64.64 L234.57 64.66 L234.92 64.68 L235.26 64.71 L235.60 64.73 L235.94 64.75 L236.28 64.78 L236.63 64.81 L236.97 64.83 L237.31 64.86 L237.65 64.88 L238.00 64.91 L238.34 64.94 L238.68 64.97 L239.02 65.00 L239.37 65.03 L239.71 65.06 L240.05 65.09 L240.39 65.12 L240.74 65.15 L241.08 65.18 L241.42 65.21 L241.76 65.25 L242.10 65.28 L242.45 65.31 L242.79 65.35 L243.13 65.38 L243.47 65.42 L243.82 65.46 L244.16 65.50 L244.50 65.53 L244.84 65.57 L245.19 65.61 L245.53 65.65 L245.87 65.70 L246.21 65.74 L246.55 65.78 L246.90 65.83 L247.24 65.87 L247.58 65.92 L247.92 65.96 L248.27 66.01 L248.61 66.06 L248.95 66.11 L249.29 66.16 L249.64 66.21 L249.98 66.26 L250.32 66.32 L250.66 66.37 L251.01 66.43 L251.35 66.49 L251.69 66.55 L252.03 66.61 L252.37 66.67 L252.72 66.73 L253.06 66.80 L253.40 66.86 L253.74 66.93 L254.09 67.00 L254.43 67.07 L254.77 67.14 L255.11 67.22 L255.46 67.29 L255.80 67.37 L256.14 67.45 L256.48 67.53 L256.82 67.61 L257.17 67.70 L257.51 67.79 L257.85 67.88 L258.19 67.97 L258.54 68.06 L258.88 68.16 L259.22 68.26 L259.56 68.36 L259.91 68.47 L260.25 68.58 L260.59 68.69 L260.93 68.80 L261.28 68.92 L261.62 69.04 L261.96 69.16 L262.30 69.29 L262.64 69.42 L262.99 69.55 L263.33 69.69 L263.67 69.83 L264.01 69.98 L264.36 70.13 L264.70 70.29 L265.04 70.45 L265.38 70.61 L265.73 70.78 L266.07 70.96 L266.41 71.14 L266.75 71.32 L267.09 71.52 L267.44 71.72 L267.78 71.92 L268.12 72.13 L268.46 72.35 L268.81 72.58 L269.15 72.82 L269.49 73.06 L269.83 73.31 L270.18 73.57 L270.52 73.84 L270.86 74.12 L271.20 74.41 L271.55 74.72 L271.89 75.03 L272.23 75.35 L272.57 75.69 L272.91 76.04 L273.26 76.40 L273.60 76.78 L273.94 77.18 L274.28 77.58 L274.63 78.01 L274.97 78.46 L275.31 78.92 L275.65 79.40 L276.00 79.91 L276.34 80.43 L276.68 80.99 L277.02 81.56 L277.36 82.16 L277.71 82.79 L278.05 83.45 L278.39 84.14 L278.73 84.87 L279.08 85.63 L279.42 86.43 L279.76 87.27 L280.10 88.15 L280.45 89.07 L280.79 90.05 L281.13 91.08 L281.47 92.17 L281.82 93.31 L282.16 94.52 L282.50 95.80 L282.84 97.15 L283.19 98.58 L283.53 100.10 L283.87 101.70 L284.21 103.41 L284.56 105.22 L284.90 107.15 L285.24 109.20 L285.58 111.38 L285.93 113.71 L286.27 116.19 L286.61 118.84 L286.96 121.68 L287.30 124.71 L287.64 127.95 L287.99 131.43 L288.33 135.16 L288.68 139.16 L289.02 143.46 L289.37 148.08 L289.71 153.04 L290.06 158.38 L290.41 164.12 L290.76 170.30 L291.11 176.94 L291.46 184.08 L291.81 191.75 L292.17 199.97 L292.53 208.78 L292.89 218.18 L293.26 228.18 L293.63 238.77 L294.01 249.90 L294.39 261.50 L294.78 273.44 L295.18 285.54 L295.60 297.53 L296.03 309.05 L296.47 319.65 L296.94 328.81 L297.43 335.97 L297.94 340.63 L298.50 342.42 L298.55 342.43 L298.86 341.32 L299.20 337.65 L299.55 331.72 L299.89 323.95 L300.23 314.80 L300.57 304.72 L300.92 294.10 L301.26 283.26 L301.60 272.44 L301.94 261.82 L302.29 251.53 L302.63 241.66 L302.97 232.24 L303.31 223.31 L303.65 214.88 L304.00 206.93 L304.34 199.47 L304.68 192.45 L305.02 185.88 L305.37 179.72 L305.71 173.95 L306.05 168.54 L306.39 163.48 L306.74 158.73 L307.08 154.28 L307.42 150.10 L307.76 146.18 L308.11 142.50 L308.45 139.04 L308.79 135.79 L309.13 132.73 L309.47 129.85 L309.82 127.13 L310.16 124.57 L310.50 122.15 L310.84 119.86 L311.19 117.70 L311.53 115.65 L311.87 113.71 L312.21 111.88 L312.56 110.14 L312.90 108.48 L313.24 106.91 L313.58 105.42 L313.92 104.00 L314.27 102.65 L314.61 101.36 L314.95 100.13 L315.29 98.96 L315.64 97.84 L315.98 96.77 L316.32 95.75 L316.66 94.77 L317.01 93.84 L317.35 92.94 L317.69 92.09 L318.03 91.26 L318.38 90.48 L318.72 89.72 L319.06 88.99 L319.40 88.30 L319.74 87.62 L320.09 86.98 L320.43 86.36 L320.77 85.76 L321.11 85.18 L321.46 84.63 L321.80 84.10 L322.14 83.58 L322.48 83.08 L322.83 82.60 L323.17 82.14 L323.51 81.69 L323.85 81.26 L324.20 80.84 L324.54 80.44 L324.88 80.04 L325.22 79.67 L325.56 79.30 L325.91 78.94 L326.25 78.60 L326.59 78.27 L326.93 77.94 L327.28 77.63 L327.62 77.32 L327.96 77.03 L328.30 76.74 L328.65 76.47 L328.99 76.19 L329.33 75.93 L329.67 75.68 L330.01 75.43 L330.36 75.19 L330.70 74.95 L331.04 74.73 L331.38 74.50 L331.73 74.29 L332.07 74.08 L332.41 73.87 L332.75 73.67 L333.10 73.48 L333.44 73.29 L333.78 73.11 L334.12 72.93 L334.46 72.75 L334.81 72.58 L335.15 72.41 L335.49 72.25 L335.83 72.09 L336.18 71.93 L336.52 71.78 L336.86 71.64 L337.20 71.49 L337.55 71.35 L337.89 71.21 L338.23 71.08 L338.57 70.95 L338.92 70.82 L339.26 70.69 L339.60 70.57 L339.94 70.45 L340.28 70.33 L340.63 70.22 L340.97 70.10 L341.31 69.99 L341.65 69.88 L342.00 69.78 L342.34 69.68 L342.68 69.57 L343.02 69.48 L343.37 69.38 L343.71 69.28 L344.05 69.19 L344.39 69.10 L344.73 69.01 L345.08 68.92 L345.42 68.83 L345.76 68.75 L346.10 68.67 L346.45 68.59 L346.79 68.51 L347.13 68.43 L347.47 68.35 L347.82 68.28 L348.16 68.20 L348.50 68.13 L348.84 68.06 L349.19 67.99 L349.53 67.92 L349.87 67.86 L350.21 67.79 L350.55 67.72 L350.90 67.66 L351.24 67.60 L351.58 67.54 L351.92 67.48 L352.27 67.42 L352.61 67.36 L352.95 67.30 L353.29 67.25 L353.64 67.19 L353.98 67.14 L354.32 67.08 L354.66 67.03 L355.00 66.98 L355.35 66.93 L355.69 66.88 L356.03 66.83 L356.37 66.78 L356.72 66.73 L357.06 66.69 L357.40 66.64 L357.74 66.60 L358.09 66.55 L358.43 66.51 L358.77 66.46 L359.11 66.42 L359.46 66.38 L359.80 66.34 L360.14 66.30 L360.48 66.26 L360.82 66.22 L361.17 66.18 L361.51 66.14 L361.85 66.11 L362.19 66.07 L362.54 66.03 L362.88 66.00 L363.22 65.96 L363.56 65.93 L363.91 65.89 L364.25 65.86 L364.59 65.82 L364.93 65.79 L365.27 65.76 L365.62 65.73 L365.96 65.70 L366.30 65.67 L366.64 65.63 L366.99 65.60 L367.33 65.58 L367.67 65.55 L368.01 65.52 L368.36 65.49 L368.70 65.46 L369.04 65.43 L369.38 65.41 L369.73 65.38 L370.07 65.35 L370.41 65.33 L370.75 65.30 L371.09 65.27 L371.44 65.25 L371.78 65.22 L372.12 65.20 L372.46 65.18 L372.81 65.15 L373.15 65.13 L373.49 65.11 L373.83 65.08 L374.18 65.06 L374.52 65.04 L374.86 65.02 L375.20 64.99 L375.55 64.97 L375.89 64.95 L376.23 64.93 L376.57 64.91 L376.91 64.89 L377.26 64.87 L377.60 64.85 L377.94 64.83 L378.28 64.81 L378.63 64.79 L378.97 64.77 L379.31 64.75 L379.65 64.73 L380.00 64.72 L380.34 64.70 L380.68 64.68 L381.02 64.66 L381.36 64.65 L381.71 64.63 L382.05 64.61 L382.39 64.59 L382.73 64.58 L383.08 64.56 L383.42 64.55 L383.76 64.53 L384.10 64.51 L384.45 64.50 L384.79 64.48 L385.13 64.47 L385.47 64.45 L385.81 64.44 L386.16 64.42 L386.50 64.41 L386.84 64.39 L387.18 64.38 L387.53 64.36 L387.87 64.35 L388.21 64.34 L388.55 64.32 L388.90 64.31 L389.24 64.30 L389.58 64.28 L389.92 64.27 L390.27 64.26 L390.61 64.24 L390.95 64.23 L391.29 64.22 L391.63 64.21 L391.98 64.19 L392.32 64.18 L392.66 64.17 L393.00 64.16 L393.35 64.15 L393.69 64.13 L394.03 64.12 L394.37 64.11 L394.72 64.10 L395.06 64.09 L395.40 64.08 L395.74 64.07 L396.08 64.06 L396.43 64.05 L396.77 64.04 L397.11 64.02 L397.45 64.01 L397.80 64.00 L398.14 63.99 L398.48 63.98 L398.82 63.97 L399.17 63.96 L399.51 63.95 L399.85 63.94 L400.19 63.93 L400.54 63.93 L400.88 63.92 L401.22 63.91 L401.56 63.90 L401.90 63.89 L402.25 63.88 L402.59 63.87 L402.93 63.86 L403.27 63.85 L403.62 63.84 L403.96 63.84 L404.30 63.83 L404.64 63.82 L404.99 63.81 L405.33 63.80 L405.67 63.79 L406.01 63.79 L406.35 63.78 L406.70 63.77 L407.04 63.76 L407.38 63.75 L407.72 63.75 L408.07 63.74 L408.41 63.73 L408.75 63.72 L409.09 63.72 L409.44 63.71 L409.78 63.70 L410.12 63.69 L410.46 63.69 L410.81 63.68 L411.15 63.67 L411.49 63.66 L411.83 63.66 L412.17 63.65 L412.52 63.64 L412.86 63.64 L413.20 63.63 L413.54 63.62 L413.89 63.62 L414.23 63.61 L414.57 63.60 L414.91 63.60 L415.26 63.59 L415.60 63.59 L415.94 63.58 L416.28 63.57 L416.62 63.57 L416.97 63.56 L417.31 63.55 L417.65 63.55 L417.99 63.54 L418.34 63.54 L418.68 63.53 L419.02 63.52 L419.36 63.52 L419.71 63.51 L420.05 63.51 L420.39 63.50 L420.73 63.50 L421.08 63.49 L421.42 63.49 L421.76 63.48 L422.10 63.47 L422.44 63.47 L422.79 63.46 L423.13 63.46 L423.47 63.45 L423.81 63.45 L424.16 63.44 L424.50 63.44 L424.84 63.43 L425.18 63.43 L425.53 63.42 L425.87 63.42 L426.21 63.41 L426.55 63.41 L426.89 63.40 L427.24 63.40 L427.58 63.39 L427.92 63.39 L428.26 63.38 L428.61 63.38 L428.95 63.38 L429.29 63.37 L429.63 63.37 L429.98 63.36 L430.32 63.36 L430.66 63.35 L431.00 63.35 L431.35 63.34 L431.69 63.34 L432.03 63.34 L432.37 63.33 L432.71 63.33 L433.06 63.32 L433.40 63.32 L433.74 63.31 L434.08 63.31 L434.43 63.31 L434.77 63.30 L435.11 63.30 L435.45 63.29 L435.80 63.29 L436.14 63.29 L436.48 63.28 L436.82 63.28 L437.16 63.28 L437.51 63.27 L437.85 63.27 L438.19 63.26 L438.53 63.26 L438.88 63.26 L439.22 63.25 L439.56 63.25 L439.90 63.25 L440.25 63.24 L440.59 63.24 L440.93 63.24 L441.27 63.23 L441.62 63.23 L441.96 63.22 L442.30 63.22 L442.64 63.22 L442.98 63.21 L443.33 63.21 L443.67 63.21 L444.01 63.20 L444.35 63.20 L444.70 63.20 L445.04 63.19 L445.38 63.19 L445.72 63.19 L446.07 63.19 L446.41 63.18 L446.75 63.18 L447.09 63.18 L447.43 63.17 L447.78 63.17 L448.12 63.17 L448.46 63.16 L448.80 63.16 L449.15 63.16 L449.49 63.15 L449.83 63.15 L450.17 63.15 L450.52 63.15 L450.86 63.14 L451.20 63.14 L451.54 63.14 L451.89 63.13 L452.23 63.13 L452.57 63.13 L452.91 63.13 L453.25 63.12 L453.60 63.12 L453.94 63.12 L454.28 63.11 L454.62 63.11 L454.97 63.11 L455.31 63.11 L455.65 63.10 L455.99 63.10 L456.34 63.10 L456.68 63.10 L457.02 63.09 L457.36 63.09 L457.70 63.09 L458.05 63.09 L458.39 63.08 L458.73 63.08 L459.07 63.08 L459.42 63.08 L459.76 63.07 L460.10 63.07 L460.44 63.07 L460.79 63.07 L461.13 63.06 L461.47 63.06 L461.81 63.06 L462.16 63.06 L462.50 63.06 L462.84 63.05 L463.18 63.05 L463.52 63.05 L463.87 63.05 L464.21 63.04 L464.55 63.04 L464.89 63.04 L465.24 63.04 L465.58 63.03 L465.92 63.03 L466.26 63.03 L466.61 63.03 L466.95 63.03 L467.29 63.02 L467.63 63.02 L467.97 63.02 L468.32 63.02 L468.66 63.02 L469.00 63.01 L469.34 63.01 L469.69 63.01 L470.03 63.01 L470.37 63.01 L470.71 63.00 L471.06 63.00 L471.40 63.00 L471.74 63.00 L472.08 63.00 L472.43 62.99 L472.77 62.99 L473.11 62.99 L473.45 62.99 L473.79 62.99 L474.14 62.98 L474.48 62.98 L474.82 62.98 L475.16 62.98 L475.51 62.98 L475.85 62.97 L476.19 62.97 L476.53 62.97 L476.88 62.97 L477.22 62.97 L477.56 62.97 L477.90 62.96 L478.25 62.96 L478.59 62.96 L478.93 62.96 L479.27 62.96 L479.61 62.96 L479.96 62.95 L480.30 62.95 L480.64 62.95 L480.98 62.95 L481.33 62.95 L481.67 62.95 L482.01 62.94 L482.35 62.94 L482.70 62.94 L483.04 62.94 L483.38 62.94 L483.72 62.94 L484.06 62.93 L484.41 62.93 L484.75 62.93 L485.09 62.93 L485.43 62.93 L485.78 62.93 L486.12 62.92 L486.46 62.92 L486.80 62.92 L487.15 62.92 L487.49 62.92 L487.83 62.92 L488.17 62.92 L488.52 62.91 L488.86 62.91 L489.20 62.91 L489.54 62.91 L489.88 62.91 L490.23 62.91 L490.57 62.90 L490.91 62.90 L491.25 62.90 L491.60 62.90 L491.94 62.90 L492.28 62.90 L492.62 62.90 L492.97 62.90 L493.31 62.89 L493.65 62.89 L493.99 62.89 L494.33 62.89 L494.68 62.89 L495.02 62.89 L495.36 62.89 L495.70 62.88 L496.05 62.88 L496.39 62.88 L496.73 62.88 L497.07 62.88 L497.42 62.88 L497.76 62.88 L498.10 62.88 L498.44 62.87 L498.78 62.87 L499.13 62.87 L499.47 62.87 L499.81 62.87 L500.15 62.87 L500.50 62.87 L500.84 62.86 L501.18 62.86 L501.52 62.86 L501.87 62.86 L502.21 62.86 L502.55 62.86 L502.89 62.86 L503.24 62.86 L503.58 62.86 L503.92 62.85 L504.26 62.85 L504.60 62.85 L504.95 62.85 L505.29 62.85 L505.63 62.85 L505.97 62.85 L506.32 62.85 L506.66 62.84 L507.00 62.84 L507.34 62.84 L507.69 62.84 L508.03 62.84 L508.37 62.84 L508.71 62.84 L509.06 62.84 L509.40 62.84 L509.74 62.83 L510.08 62.83 L510.42 62.83 L510.77 62.83 L511.11 62.83 L511.45 62.83 L511.79 62.83 L512.14 62.83 L512.48 62.83 L512.82 62.83 L513.16 62.82 L513.51 62.82 L513.85 62.82 L514.19 62.82 L514.53 62.82 L514.87 62.82 L515.22 62.82 L515.56 62.82 L515.90 62.82 L516.24 62.82 L516.59 62.81 L516.93 62.81 L517.27 62.81 L517.61 62.81 L517.96 62.81 L518.30 62.81 L518.64 62.81 L518.98 62.81 L519.33 62.81 L519.67 62.81 L520.01 62.80 L520.35 62.80 L520.69 62.80 L521.04 62.80 L521.38 62.80 L521.72 62.80 L522.06 62.80 L522.41 62.80 L522.75 62.80 L523.09 62.80 L523.43 62.80 L523.78 62.79 L524.12 62.79 L524.46 62.79 L524.80 62.79 L525.14 62.79 L525.49 62.79 L525.83 62.79 L526.17 62.79 L526.51 62.79 L526.86 62.79 L527.20 62.79 L527.54 62.78 L527.88 62.78 L528.23 62.78 L528.57 62.78 L528.91 62.78 L529.25 62.78 L529.60 62.78 L529.94 62.78 L530.28 62.78 L530.62 62.78 L530.96 62.78 L531.31 62.78 L531.65 62.77 L531.99 62.77 L532.33 62.77 L532.68 62.77 L533.02 62.77 L533.36 62.77 L533.70 62.77 L534.05 62.77 L534.39 62.77 L534.73 62.77 L535.07 62.77 L535.41 62.77 L535.76 62.77 L536.10 62.76 L536.44 62.76 L536.78 62.76 L537.13 62.76 L537.47 62.76 L537.81 62.76 L538.15 62.76 L538.50 62.76 L538.84 62.76 L539.18 62.76 L539.52 62.76 L539.87 62.76 L540.21 62.76 L540.55 62.76 L540.89 62.75 L541.23 62.75 L541.58 62.75 L541.92 62.75 L542.26 62.75 L542.60 62.75 L542.95 62.75 L543.29 62.75 L543.63 62.75 L543.97 62.75 L544.32 62.75 L544.66 62.75 L545.00 62.75" stroke="#b41e1e" stroke-width="1.15" fill="none" stroke-linejoin="round"/>
<path d="M307.0 142.3 l-4.2 -7.6 h8.4 Z" fill="#fff" fill-opacity="0.6" stroke="#000" stroke-width="1"/>
<text x="308.98" y="130.49" font-size="11" text-anchor="middle" fill="#000" >m1</text>
<path d="M303.3 195.1 l-4.2 -7.6 h8.4 Z" fill="#fff" fill-opacity="0.6" stroke="#000" stroke-width="1"/>
<text x="305.33" y="183.30" font-size="11" text-anchor="middle" fill="#000" >m2</text>
<path d="M297.9 341.9 l-4.2 -7.6 h8.4 Z" fill="#fff" fill-opacity="0.6" stroke="#000" stroke-width="1"/>
<text x="299.85" y="330.13" font-size="11" text-anchor="middle" fill="#000" >m3</text>
<rect x="463.5" y="59.5" width="97" height="48" fill="#c0c0c0"/>
<rect x="458.5" y="54.5" width="96" height="48" fill="#fff" stroke="#000" stroke-width="1" shape-rendering="crispEdges"/>
<path d="M459 72.5H554" stroke="#c0c0c0" stroke-width="1" shape-rendering="crispEdges"/>
<text x="506.50" y="68.00" font-size="11" text-anchor="middle" fill="#000" >Curve Info</text>
<path d="M463.5 81.5H487" stroke="#c01010" stroke-width="2"/>
<text x="549.50" y="86.00" font-size="11" text-anchor="end" fill="#000" >dB(St(1,1))</text>
<text x="463.50" y="98.00" font-size="11" text-anchor="start" fill="#000" >Setup1 : Sweep1</text>
<rect x="119" y="212.5" width="139" height="72.5" fill="#c0c0c0"/>
<rect x="113.5" y="207.5" width="138" height="72" fill="#fff" stroke="#000" stroke-width="1" shape-rendering="crispEdges"/>
<path d="M166.5 208V279M207.5 208V279M114 225.5H251M114 243.5H251M114 261.5H251" stroke="#808080" stroke-width="1" shape-rendering="crispEdges"/>
<text x="140.00" y="221.00" font-size="11" text-anchor="middle" fill="#000" >Name</text>
<text x="187.00" y="221.00" font-size="11" text-anchor="middle" fill="#000" >X</text>
<text x="229.50" y="221.00" font-size="11" text-anchor="middle" fill="#000" >Y</text>
<text x="140.00" y="239.00" font-size="11" text-anchor="middle" fill="#000" >m1</text>
<text x="187.00" y="239.00" font-size="11" text-anchor="middle" fill="#000" >2.9980</text>
<text x="229.50" y="239.00" font-size="11" text-anchor="middle" fill="#000" >-2.6010</text>
<text x="140.00" y="257.00" font-size="11" text-anchor="middle" fill="#000" >m2</text>
<text x="187.00" y="257.00" font-size="11" text-anchor="middle" fill="#000" >2.9749</text>
<text x="229.50" y="257.00" font-size="11" text-anchor="middle" fill="#000" >-4.3117</text>
<text x="140.00" y="275.00" font-size="11" text-anchor="middle" fill="#000" >m3</text>
<text x="187.00" y="275.00" font-size="11" text-anchor="middle" fill="#000" >2.9402</text>
<text x="229.50" y="275.00" font-size="11" text-anchor="middle" fill="#000" >-9.0681</text>
</svg></div>
<div class="abs" style="z-index:20;left:875px;top:554.2px;font-family:'Liberation Sans','Noto Sans CJK SC',sans-serif;font-weight:900;font-size:29px;line-height:38px;white-space:nowrap;letter-spacing:0.1px;opacity:.47;transform:scale(1.012,0.93);transform-origin:0 50%" id="wm1"><span style="color:#d9434e">易迪拓</span><span style="color:#3e6db5">培训</span></div>
<div class="abs" style="z-index:20;left:873px;top:587.6px;width:150px;height:1.6px;background:rgba(150,150,150,.5)"></div>
<div class="abs" style="z-index:20;left:875px;top:588.5px;font-family:'Liberation Serif','Noto Serif CJK SC',serif;font-weight:bold;font-size:15px;line-height:22px;white-space:nowrap;color:#858585;opacity:.92;letter-spacing:0px;-webkit-text-stroke:0.35px #858585;transform:scaleX(1.095);transform-origin:0 50%" id="wm2">射频和天线设计专家</div></body></html>
